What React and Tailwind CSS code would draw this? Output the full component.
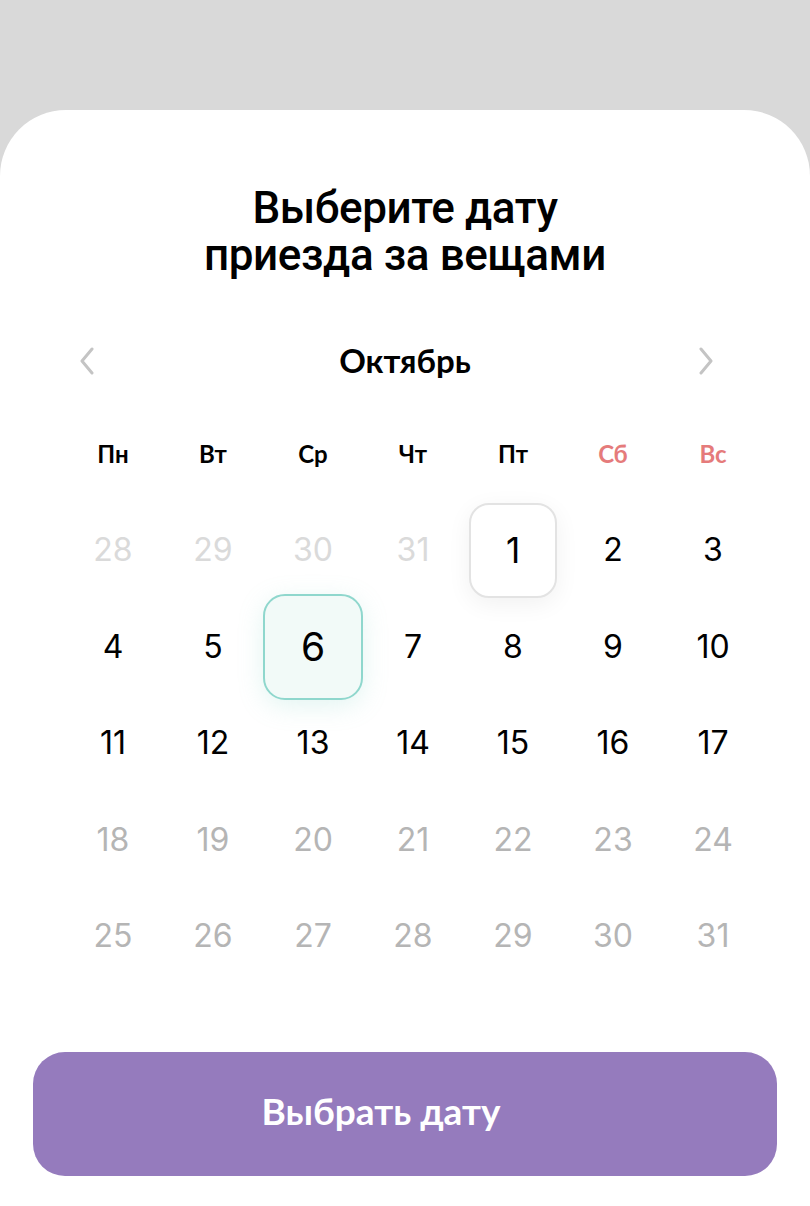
import React from "react";

const weekdays = [
  { t: "Пн", red: false },
  { t: "Вт", red: false },
  { t: "Ср", red: false },
  { t: "Чт", red: false },
  { t: "Пт", red: false },
  { t: "Сб", red: true },
  { t: "Вс", red: true },
];

const rows = [
  [["28", "prev"], ["29", "prev"], ["30", "prev"], ["31", "prev"], ["1", "sel1"], ["2", "cur"], ["3", "cur"]],
  [["4", "cur"], ["5", "cur"], ["6", "sel6"], ["7", "cur"], ["8", "cur"], ["9", "cur"], ["10", "cur"]],
  [["11", "cur"], ["12", "cur"], ["13", "cur"], ["14", "cur"], ["15", "cur"], ["16", "cur"], ["17", "cur"]],
  [["18", "dim"], ["19", "dim"], ["20", "dim"], ["21", "dim"], ["22", "dim"], ["23", "dim"], ["24", "dim"]],
  [["25", "dim"], ["26", "dim"], ["27", "dim"], ["28", "dim"], ["29", "dim"], ["30", "dim"], ["31", "dim"]],
];

function Day({ n, kind }) {
  if (kind === "sel1") {
    return (
      <div className="flex h-[95px] w-[88px] shrink-0 items-center justify-center rounded-[20px] border-2 border-[#e3e3e3] bg-white text-[35px] text-black shadow-[0_6px_24px_rgba(0,0,0,0.06)]">
        {n}
      </div>
    );
  }
  if (kind === "sel6") {
    return (
      <div className="flex h-[106px] w-[100px] shrink-0 items-center justify-center rounded-[22px] border-2 border-[#8fd7cd] bg-[#f2faf8] text-[39px] text-black shadow-[0_6px_24px_rgba(143,215,205,0.25)]">
        {n}
      </div>
    );
  }
  const color =
    kind === "prev" ? "text-[#dadada]" : kind === "dim" ? "text-[#b5b5b5]" : "text-black";
  return <span className={`text-[32px] leading-none ${color}`}>{n}</span>;
}

export default function App() {
  return (
    <div
      className="flex min-h-[1206px] w-[810px] flex-col bg-[#d9d9d9]"
      style={{ fontFamily: "Inter, 'Noto Sans', sans-serif" }}
    >
      <div className="h-[110px] shrink-0" />
      <div className="flex flex-1 flex-col rounded-t-[66px] bg-white">
        <h1
          className="mt-[75px] text-center text-[44px] font-medium leading-[47px] tracking-[-0.4px] text-black"
          style={{ fontFamily: "Roboto, 'Noto Sans', sans-serif" }}
        >
          Выберите дату
          <br />
          приезда за вещами
        </h1>

        <div className="mt-[57px] grid h-[40px] grid-cols-[1fr_auto_1fr] items-center">
          <div className="flex justify-start pl-[79px]">
            <svg width="16" height="28" viewBox="0 0 16 28" fill="none">
              <path d="M13 2L3 14L13 26" stroke="#c4c4c4" strokeWidth="3" strokeLinecap="round" strokeLinejoin="round" />
            </svg>
          </div>
          <span
            className="text-[33px] font-bold text-black"
            style={{ fontFamily: "Lato, 'Noto Sans', sans-serif" }}
          >
            Октябрь
          </span>
          <div className="flex justify-end pr-[96px]">
            <svg width="16" height="28" viewBox="0 0 16 28" fill="none">
              <path d="M3 2L13 14L3 26" stroke="#c4c4c4" strokeWidth="3" strokeLinecap="round" strokeLinejoin="round" />
            </svg>
          </div>
        </div>

        <div
          className="ml-[63px] mt-[60px] grid h-[30px] w-[700px] grid-cols-7 items-center"
          style={{ fontFamily: "Lato, 'Noto Sans', sans-serif" }}
        >
          {weekdays.map((w) => (
            <div
              key={w.t}
              className={`text-center text-[24px] font-bold ${w.red ? "text-[#e57b7b]" : "text-black"}`}
            >
              {w.t}
            </div>
          ))}
        </div>

        <div className="ml-[63px] mt-[36px] flex w-[700px] flex-col">
          {rows.map((r, i) => (
            <div key={i} className="grid grid-cols-7">
              {r.map(([n, kind], j) => (
                <div key={j} className="flex h-[96.5px] items-center justify-center">
                  <Day n={n} kind={kind} />
                </div>
              ))}
            </div>
          ))}
        </div>

        <button
          className="mx-[33px] mt-[67px] flex h-[124px] items-center justify-center rounded-[32px] bg-[#957bbd] pb-[6px] pr-[48px] text-[37px] font-bold text-white"
          style={{ fontFamily: "Lato, 'Noto Sans', sans-serif" }}
        >
          Выбрать дату
        </button>
      </div>
    </div>
  );
}
